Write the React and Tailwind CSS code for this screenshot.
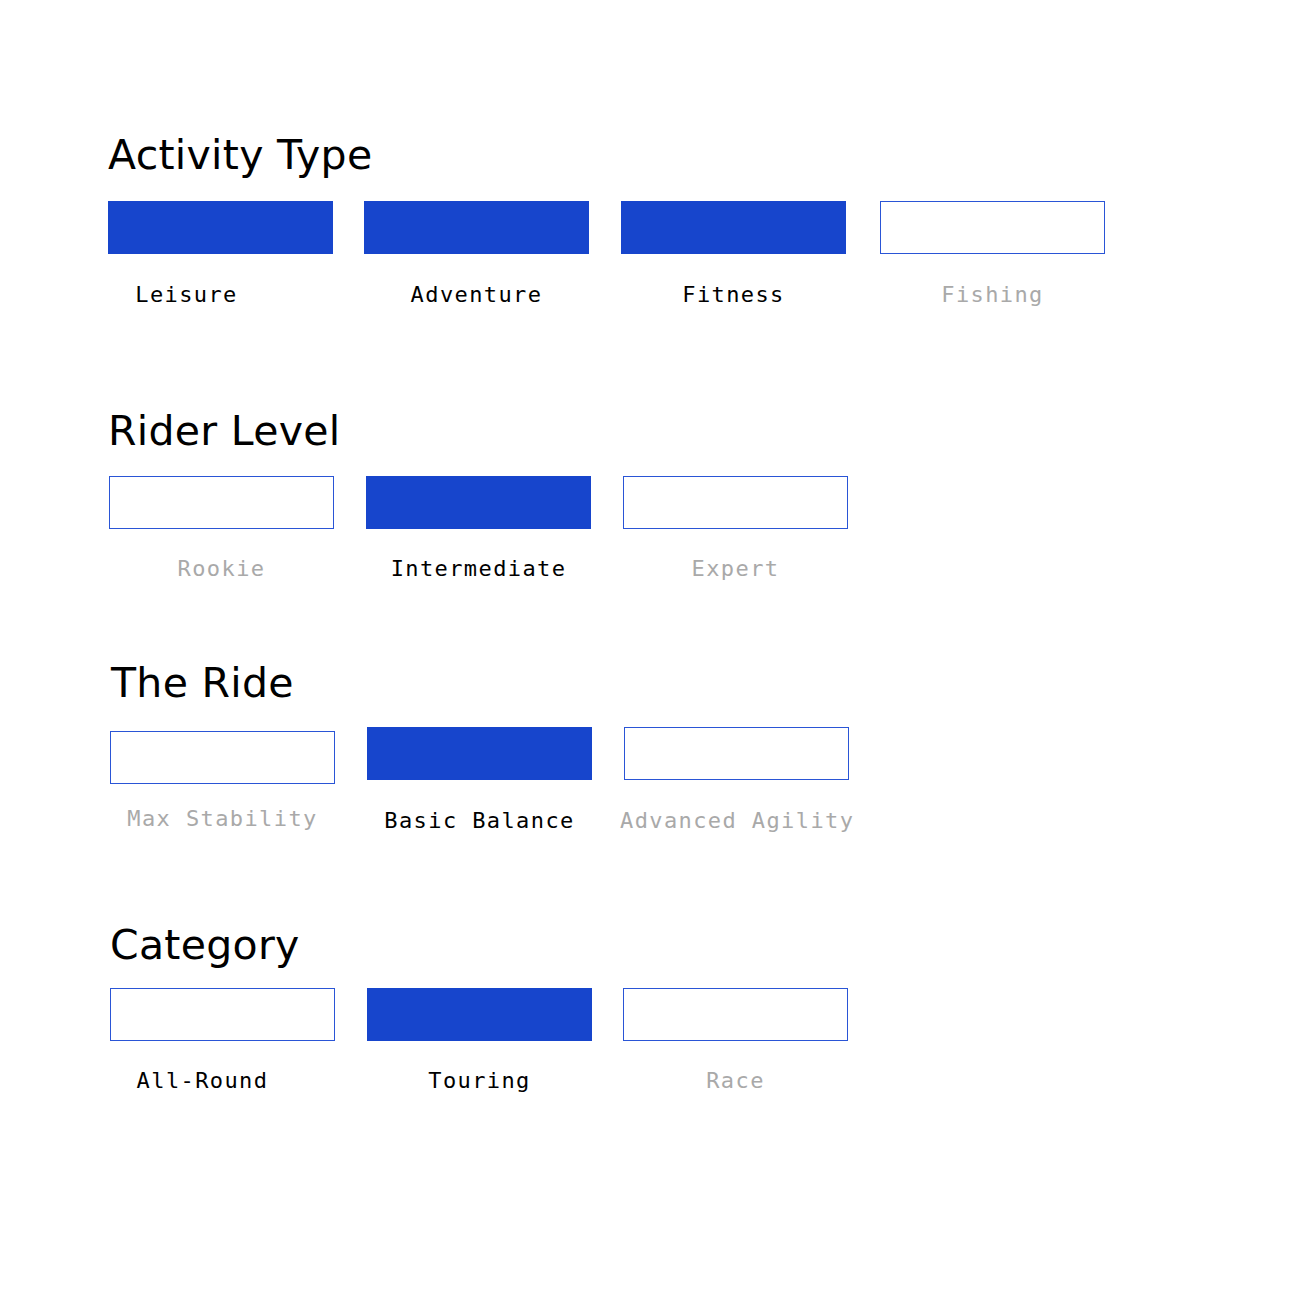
import React from 'react';

const sections = [
  {
    title: 'Activity Type',
    headingClass: 'pt-[135px] pl-[108px]',
    rowClass: 'mt-[25px] pl-[108px] gap-[32px]',
    items: [
      { label: 'Leisure', on: true, labelClass: 'mt-[30px] pr-[68px]' },
      { label: 'Adventure', on: true, labelClass: 'mt-[30px]', boxClass: 'ml-[-1px]' },
      { label: 'Fitness', on: true, labelClass: 'mt-[30px]' },
      { label: 'Fishing', on: false, labelClass: 'mt-[30px]', boxClass: 'ml-[2px]' },
    ],
  },
  {
    title: 'Rider Level',
    headingClass: 'pt-[105px] pl-[108px]',
    rowClass: 'mt-[24px] pl-[109px] gap-[32px]',
    items: [
      { label: 'Rookie', on: false, labelClass: 'mt-[29px]' },
      { label: 'Intermediate', on: true, labelClass: 'mt-[29px]' },
      { label: 'Expert', on: false, labelClass: 'mt-[29px]' },
    ],
  },
  {
    title: 'The Ride',
    headingClass: 'pt-[83px] pl-[111px]',
    rowClass: 'mt-[23px] pl-[110px] gap-[32px]',
    items: [
      { label: 'Max Stability', on: false, boxClass: 'mt-[4px]', labelClass: 'mt-[24px]' },
      { label: 'Basic Balance', on: true, labelClass: 'mt-[30px]' },
      { label: 'Advanced Agility', on: false, labelClass: 'mt-[30px] ml-[-4px]' },
    ],
  },
  {
    title: 'Category',
    headingClass: 'pt-[93px] pl-[110px]',
    rowClass: 'mt-[22px] pl-[110px] gap-[32px]',
    items: [
      { label: 'All-Round', on: false, dark: true, labelClass: 'mt-[29px] pr-[40px]' },
      { label: 'Touring', on: true, labelClass: 'mt-[29px]' },
      { label: 'Race', on: false, labelClass: 'mt-[29px]', boxClass: 'ml-[-1px]' },
    ],
  },
];

const Option = ({ item }) => (
  <div className={`flex flex-col w-[225px] ${item.boxClass || ''}`}>
    <div
      className={`h-[53px] w-[225px] ${
        item.on ? 'bg-[#1745cc]' : 'bg-white border border-[#2a55d6]'
      }`}
    />
    <div
      className={`text-center whitespace-nowrap text-[22px] leading-[22px] tracking-[1.4px] ${
        item.on || item.dark ? 'text-black' : 'text-[#a9a9a9]'
      } ${item.labelClass || ''}`}
      style={{ fontFamily: '"DejaVu Sans Mono", monospace' }}
    >
      {item.label}
    </div>
  </div>
);

const App = () => {
  return (
    <div className="min-h-[1300px] w-[1300px] bg-white">
      {sections.map((section) => (
        <div key={section.title}>
          <h2
            className={`text-[41px] leading-[41px] font-normal tracking-[0.3px] text-black ${section.headingClass}`}
            style={{ fontFamily: '"DejaVu Sans", sans-serif' }}
          >
            {section.title}
          </h2>
          <div className={`flex items-start ${section.rowClass}`}>
            {section.items.map((item) => (
              <Option key={item.label} item={item} />
            ))}
          </div>
        </div>
      ))}
    </div>
  );
};

export default App;
